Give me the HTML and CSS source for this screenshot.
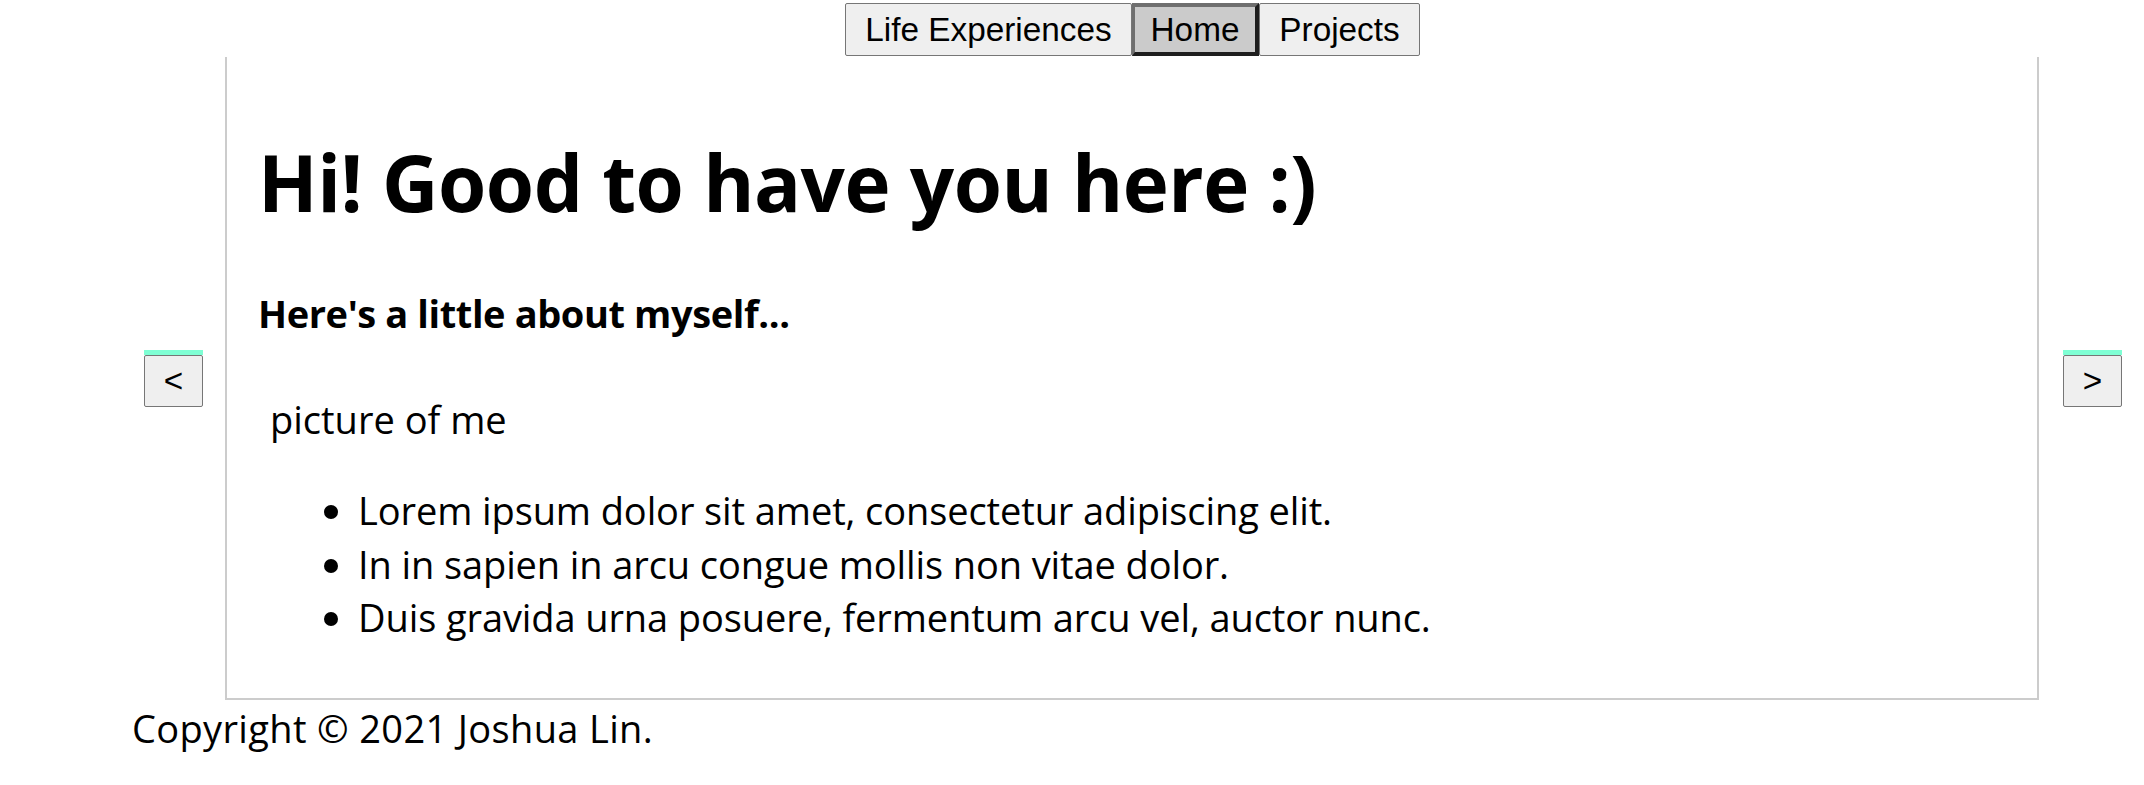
FILE: index.html
```html
<!DOCTYPE html>
<html lang="en">
<head>
<meta charset="utf-8">
<title>Joshua Lin</title>
<link rel="stylesheet" href="styles.css">
</head>
<body>
<nav class="nav">
  <button class="nav-btn nav-life">Life Experiences</button>
  <button class="nav-btn nav-home is-active">Home</button>
  <button class="nav-btn nav-proj">Projects</button>
</nav>
<div class="main">
  <div class="arrow"><button class="arrow-btn">&lt;</button></div>
  <section class="panel">
    <h1 class="title">Hi! Good to have you here :)</h1>
    <h4 class="subtitle">Here's a little about myself...</h4>
    <p class="pic">picture of me</p>
    <ul class="facts">
      <li>Lorem ipsum dolor sit amet, consectetur adipiscing elit.</li>
      <li>In in sapien in arcu congue mollis non vitae dolor.</li>
      <li>Duis gravida urna posuere, fermentum arcu vel, auctor nunc.</li>
    </ul>
  </section>
  <div class="arrow"><button class="arrow-btn">&gt;</button></div>
</div>
<footer class="footer">Copyright © 2021 Joshua Lin.</footer>
</body>
</html>
```
FILE: styles.css
```css
html, body {
  margin: 0;
  padding: 0;
  background: #ffffff;
}
body {
  font-family: "Open Sans", Lato, sans-serif;
  color: #000;
  width: 2144px;
}
.nav {
  display: flex;
  margin: 3px 0 1px 845px;
  height: 53px;
}
.nav-btn {
  font-family: "Liberation Sans", Arial, sans-serif;
  font-size: 33.33px;
  color: #000;
  background: #efefef;
  border: 1px solid #767676;
  border-radius: 2px;
  height: 53px;
  padding: 0;
  margin: 0;
  box-sizing: border-box;
}
.nav-life { width: 287px; }
.nav-home { width: 127px; }
.nav-proj { width: 161px; }
.nav-btn.is-active {
  background: #cbcbcb;
  border-width: 4px 4px 4px 3px;
  border-style: solid;
  border-color: #6f6f6f #1e1e1e #1e1e1e #6f6f6f;
  border-radius: 0;
}
.main {
  display: flex;
  align-items: center;
  padding: 0 22px 0 144px;
}
.arrow {
  width: 59px;
  border-top: 5px solid #7fffd4;
  flex: none;
}
.arrow-btn {
  display: block;
  width: 59px;
  height: 52px;
  box-sizing: border-box;
  padding: 0;
  margin: 0;
  background: #efefef;
  border: 1px solid #767676;
  border-radius: 2px;
  font-family: "Liberation Sans", Arial, sans-serif;
  font-size: 33.33px;
  color: #000;
}
.panel {
  width: 1814px;
  flex: none;
  box-sizing: border-box;
  margin: 0 24px 0 22px;
  border: 2px solid #cccccc;
  border-top: none;
  padding: 0 31px 0 31px;
  height: 643px;
}
.title {
  margin: 77px 0 0 0;
  font-size: 78px;
  line-height: 96px;
  font-weight: 700;
  letter-spacing: -0.5px;
}
.subtitle {
  margin: 57px 0 0 0;
  font-size: 38px;
  line-height: 53px;
  font-weight: 700;
  letter-spacing: -0.4px;
}
.pic {
  margin: 53px 0 0 0;
  padding-left: 12px;
  font-size: 38px;
  line-height: 53px;
}
.facts {
  margin: 38px 0 0 0;
  padding-left: 100px;
  font-size: 38px;
  line-height: 53.5px;
  letter-spacing: -0.1px;
}
.footer {
  margin-top: 2px;
  padding-left: 132px;
  font-size: 38px;
  line-height: 53px;
  letter-spacing: 0.35px;
}
```
